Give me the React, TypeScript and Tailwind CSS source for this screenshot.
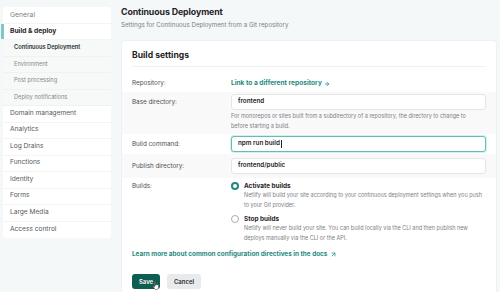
import { ArrowRight, ArrowUpRight } from "lucide-react";

const subItems = ["Continuous Deployment", "Environment", "Post processing", "Deploy notifications"];
const mainItems = ["Domain management", "Analytics", "Log Drains", "Functions", "Identity", "Forms", "Large Media", "Access control"];

const Sidebar = () => (
  <div className="relative mt-[7px] ml-[3px] w-[108px] shrink-0 self-start rounded-[3px] bg-white">
    <div className="flex h-[16.5px] items-center border-b border-[#f3f4f4] pl-[7px] text-[6.8px] text-[#7a7f82]">General</div>
    <div className="relative flex h-[16.5px] items-center border-b border-[#f3f4f4] pl-[7px] text-[6.7px] font-bold text-[#1f2326]">
      <span className="absolute -left-[2px] top-0 h-full w-[3px] bg-[#7fc9c4]" />
      Build &amp; deploy
    </div>
    {subItems.map((s, i) => (
      <div
        key={s}
        className={`flex h-[16.5px] items-center border-b border-[#f0f1f1] bg-[#f7f8f8] pl-[11px] text-[5.7px] ${
          i === 0 ? "font-semibold text-[#2a2e31]" : "text-[#85898c]"
        }`}
      >
        {s}
      </div>
    ))}
    {mainItems.map((s) => (
      <div key={s} className="flex h-[16.5px] items-center border-b border-[#f3f4f4] pl-[7px] text-[6.6px] text-[#555a5e] last:border-b-0">
        {s}
      </div>
    ))}
  </div>
);

const Row = ({ label, children, className }: { label: string; children: React.ReactNode; className: string }) => (
  <div className={`flex px-[10px] ${className}`}>
    <div className="h-[16px] w-[99px] shrink-0 text-[6.3px] leading-[16px] text-[#4b5053]">{label}</div>
    <div className="flex-1">{children}</div>
  </div>
);

const Input = ({ value, focus }: { value: string; focus?: boolean }) => (
  <div
    className={`flex h-[16px] items-center rounded-[3px] pl-[6px] text-[6.3px] font-semibold text-[#1f2326] ${
      focus ? "border-[1.5px] border-[#5fbfb5] bg-white shadow-[0_0_0_1px_#d7efec]" : "border border-[#e4e6e7] bg-white"
    }`}
  >
    {value}
    {focus && <span className="ml-[1px] h-[8px] w-[1px] bg-[#1f2326]" />}
  </div>
);

const Radio = ({ on, title, lines }: { on?: boolean; title: string; lines: string[] }) => (
  <div className="flex gap-[5px]">
    <div
      className={`flex h-[8px] w-[8px] shrink-0 items-center justify-center rounded-full ${
        on ? "bg-[#1f8a7e]" : "border border-[#a9adb0] bg-white"
      }`}
    >
      {on && <div className="h-[3.5px] w-[3.5px] rounded-full bg-white" />}
    </div>
    <div>
      <div className="text-[6.4px] leading-[8px] font-bold text-[#1f2326]">{title}</div>
      <div className="mt-[1px]">
        {lines.map((l) => (
          <div key={l} className="text-[5.5px] leading-[9.5px] text-[#7d8184]">
            {l}
          </div>
        ))}
      </div>
    </div>
  </div>
);

export default function App() {
  return (
    <div className="flex h-[292px] w-[500px] gap-[10px] overflow-hidden bg-[#f4f8f9] font-['Inter',sans-serif]">
      <Sidebar />
      <div className="flex flex-1 flex-col pr-[3px]">
        <div className="pt-[6px] text-[8.8px] leading-[12px] font-bold tracking-[-0.1px] text-[#1f2326]">Continuous Deployment</div>
        <div className="mt-[2px] text-[6.2px] leading-[10px] text-[#7d8184]">Settings for Continuous Deployment from a Git repository</div>
        <div className="mt-[10px] flex-1 rounded-t-[4px] border border-b-0 border-[#eef1f2] bg-white">
          <div className="mx-[10px] border-b border-[#f0f1f2] pb-[5px] pt-[8px] text-[8.6px] leading-[12px] font-bold text-[#1f2326]">Build settings</div>
          <div className="mt-[12px] flex h-[10px] items-center px-[10px]">
            <div className="w-[99px] text-[6.3px] text-[#4b5053]">Repository:</div>
            <div className="flex items-center gap-[2px] text-[6.6px] font-bold text-[#1f8a7e]">
              Link to a different repository <ArrowRight size={6} strokeWidth={3} />
            </div>
          </div>
          <div className="mt-[3px]">
            <Row label="Base directory:" className="bg-[#f9f9f9] pb-[3px] pt-[2px]">
              <Input value="frontend" />
              <div className="mt-[1px] text-[5.5px] leading-[10px] text-[#7d8184]">
                For monorepos or sites built from a subdirectory of a repository, the directory to change to
                <br />
                before starting a build.
              </div>
            </Row>
            <Row label="Build command:" className="py-[2px]">
              <Input value="npm run build" focus />
            </Row>
            <Row label="Publish directory:" className="bg-[#f9f9f9] py-[4px]">
              <Input value="frontend/public" />
            </Row>
            <div className="flex px-[10px] pt-[4px]">
              <div className="w-[99px] shrink-0 text-[6.3px] leading-[8px] text-[#4b5053]">Builds:</div>
              <div className="flex flex-1 flex-col gap-[5px]">
                <Radio
                  on
                  title="Activate builds"
                  lines={[
                    "Netlify will build your site according to your continuous deployment settings when you push",
                    "to your Git provider.",
                  ]}
                />
                <Radio
                  title="Stop builds"
                  lines={[
                    "Netlify will never build your site. You can build locally via the CLI and then publish new",
                    "deploys manually via the CLI or the API.",
                  ]}
                />
              </div>
            </div>
          </div>
          <div className="mt-[7px] flex h-[9px] items-center gap-[3px] px-[10px] text-[6.4px] font-bold text-[#1f8a7e]">
            Learn more about common configuration directives in the docs <ArrowUpRight size={7} strokeWidth={2.5} />
          </div>
          <div className="mt-[15px] flex gap-[7px] px-[10px]">
            <button className="relative h-[15px] w-[28px] rounded-[3px] bg-[#0f5c50] text-[6px] font-semibold text-white">
              Save
              <svg className="absolute left-[20px] top-[7px]" width="8" height="10" viewBox="0 0 8 10">
                <path
                  d="M2.5 1.2c0-.5.9-.5.9 0v3.3l.3-.6c.3-.4.9-.2.9.2l.2-.3c.3-.4.9-.2.9.2.3-.3.9-.1.9.3v2.2c0 1.2-.8 2-1.9 2h-.8c-.6 0-1-.3-1.4-.8L1.2 6c-.3-.4.2-.9.6-.6l.7.6z"
                  fill="white"
                  stroke="#222"
                  strokeWidth="0.5"
                />
              </svg>
            </button>
            <button className="h-[15px] w-[34px] rounded-[3px] bg-[#e9eaeb] text-[6px] font-semibold text-[#2a2e31]">Cancel</button>
          </div>
        </div>
      </div>
    </div>
  );
}
